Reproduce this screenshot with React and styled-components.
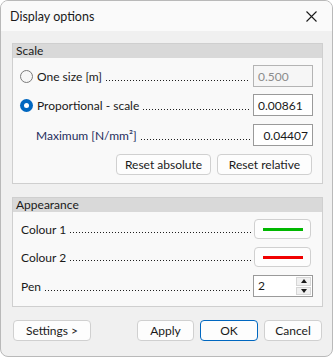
import React from "react";
import styled, { createGlobalStyle } from "styled-components";

const Global = createGlobalStyle`
  html, body { margin: 0; padding: 0; background: #ffffff; }
  body { font-family: Lato, "Noto Sans", sans-serif; font-size: 12px; color: #1a1a1a; }
  * { box-sizing: border-box; }
`;

const Window = styled.div`
  width: 333px;
  height: 357px;
  border: 1px solid #b9b9b9;
  border-radius: 8px;
  background: #f0f0f0;
  overflow: hidden;
  display: flex;
  flex-direction: column;
`;

const TitleBar = styled.div`
  height: 30px;
  background: #fafafa;
  display: flex;
  align-items: center;
  justify-content: space-between;
  padding: 0 9px 0 9px;
  font-size: 12.5px;
  color: #1a1a1a;
`;

const CloseBtn = styled.div`
  width: 20px;
  height: 20px;
  display: flex;
  align-items: center;
  justify-content: center;
  margin-right: 2px;
`;

const Body = styled.div`
  flex: 1;
  padding: 12px 9px 0 11px;
  display: flex;
  flex-direction: column;
`;

const Group = styled.div`
  border: 1px solid #cfcfcf;
  background: #f9f9f9;
  display: flex;
  flex-direction: column;
  margin-bottom: ${(p) => p.$mb || 0}px;
`;

const GroupHeader = styled.div`
  height: 14px;
  line-height: 14px;
  background: #d9d9d9;
  padding-left: 3px;
  font-size: 12px;
  color: #1a1a1a;
`;

const GroupContent = styled.div`
  display: flex;
  flex-direction: column;
  padding: ${(p) => p.$pad};
  gap: ${(p) => p.$gap}px;
`;

const Row = styled.div`
  display: flex;
  align-items: center;
  height: ${(p) => p.$h || 22}px;
  padding-left: ${(p) => p.$indent || 0}px;
  padding-right: ${(p) => p.$right || 9}px;
`;

const Radio = styled.span`
  width: 13px;
  height: 13px;
  border-radius: 50%;
  flex: none;
  margin-right: 4px;
  border: ${(p) => (p.$on ? "none" : "1px solid #7b7b7b")};
  background: ${(p) => (p.$on ? "#0067c0" : "#f6f6f6")};
  display: flex;
  align-items: center;
  justify-content: center;
  &::after {
    content: "";
    display: ${(p) => (p.$on ? "block" : "none")};
    width: 5px;
    height: 5px;
    border-radius: 50%;
    background: #ffffff;
  }
`;

const Label = styled.span`
  flex: none;
  white-space: nowrap;
  color: ${(p) => p.$color || "#1a1a1a"};
`;

const Leader = styled.span`
  flex: 1;
  align-self: stretch;
  margin: 0 3px 0 4px;
  background-image: linear-gradient(to right, #1e1e1e 1px, transparent 1px);
  background-size: 3px 1px;
  background-repeat: repeat-x;
  background-position: left bottom 6px;
`;

const Field = styled.div`
  width: 60px;
  height: 22px;
  flex: none;
  border: 1px solid ${(p) => (p.$disabled ? "#b4b4b4" : "#9a9a9a")};
  background: ${(p) => (p.$disabled ? "#f6f6f6" : "#ffffff")};
  color: ${(p) => (p.$disabled ? "#8c8c8c" : "#1a1a1a")};
  display: flex;
  align-items: center;
  justify-content: ${(p) => (p.$right ? "flex-end" : "flex-start")};
  padding: 0 4px 0 4px;
  font-size: 12px;
`;

const Button = styled.div`
  height: ${(p) => p.$h || 21}px;
  width: ${(p) => p.$w}px;
  flex: none;
  border: 1px solid ${(p) => (p.$primary ? "#0067c0" : "#d0d0d0")};
  border-radius: 4px;
  background: #fdfdfd;
  display: flex;
  align-items: center;
  justify-content: center;
  font-size: 12px;
  color: #1a1a1a;
`;

const ButtonRow = styled.div`
  display: flex;
  justify-content: flex-end;
  gap: 6px;
  padding-right: 10px;
`;

const ColourButton = styled.div`
  width: 57px;
  height: 20px;
  flex: none;
  margin-right: 2px;
  border: 1px solid #d0d0d0;
  border-radius: 4px;
  background: #fdfdfd;
  display: flex;
  align-items: center;
  justify-content: center;
  &::after {
    content: "";
    width: 40px;
    height: 3px;
    background: ${(p) => p.$colour};
  }
`;

const Spin = styled.div`
  width: 60px;
  height: 22px;
  flex: none;
  border: 1px solid #9a9a9a;
  background: #ffffff;
  display: flex;
  align-items: stretch;
  padding: 1px 1px 1px 4px;
`;

const SpinValue = styled.span`
  flex: 1;
  display: flex;
  align-items: center;
  padding-bottom: 2px;
`;

const SpinArrows = styled.div`
  width: 15px;
  display: flex;
  flex-direction: column;
  gap: 1px;
`;

const SpinArrow = styled.div`
  flex: 1;
  background: #f0f0f0;
  border: 1px solid #d6d6d6;
  display: flex;
  align-items: center;
  justify-content: center;
  &::after {
    content: "";
    width: 0;
    height: 0;
    border-left: 3px solid transparent;
    border-right: 3px solid transparent;
    ${(p) => (p.$up ? "border-bottom: 4px solid #1a1a1a;" : "border-top: 4px solid #1a1a1a;")}
  }
`;

const Footer = styled.div`
  display: flex;
  align-items: center;
  justify-content: space-between;
  padding: 0 1px 0 1px;
`;

export default function App() {
  return (
    <>
      <Global />
      <Window>
        <TitleBar>
          <span>Display options</span>
          <CloseBtn>
            <svg width="11" height="11" viewBox="0 0 11 11">
              <path d="M0.5 0.5 L10.5 10.5 M10.5 0.5 L0.5 10.5" stroke="#1a1a1a" strokeWidth="1.1" fill="none" />
            </svg>
          </CloseBtn>
        </TitleBar>
        <Body>
          <Group $mb={13}>
            <GroupHeader>Scale</GroupHeader>
            <GroupContent $pad="7px 0 8px 7px" $gap={7}>
              <Row>
                <Radio />
                <Label>One size [m]</Label>
                <Leader />
                <Field $disabled>0.500</Field>
              </Row>
              <Row>
                <Radio $on />
                <Label>Proportional - scale</Label>
                <Leader />
                <Field>0.00861</Field>
              </Row>
              <Row $indent={16} style={{ marginTop: 1 }}>
                <Label $color="#1f2d5c">Maximum [N/mm²]</Label>
                <Leader />
                <Field $right>0.04407</Field>
              </Row>
              <ButtonRow style={{ marginTop: 1 }}>
                <Button $w={95}>Reset absolute</Button>
                <Button $w={95}>Reset relative</Button>
              </ButtonRow>
            </GroupContent>
          </Group>
          <Group $mb={13}>
            <GroupHeader>Appearance</GroupHeader>
            <GroupContent $pad="7px 0 9px 8px" $gap={8}>
              <Row $h={20}>
                <Label>Colour 1</Label>
                <Leader />
                <ColourButton $colour="#00b700" />
              </Row>
              <Row $h={20}>
                <Label>Colour 2</Label>
                <Leader />
                <ColourButton $colour="#f00000" />
              </Row>
              <Row>
                <Label>Pen</Label>
                <Leader />
                <Spin>
                  <SpinValue>2</SpinValue>
                  <SpinArrows>
                    <SpinArrow $up />
                    <SpinArrow />
                  </SpinArrows>
                </Spin>
              </Row>
            </GroupContent>
          </Group>
          <Footer>
            <Button $w={78} $h={21}>Settings &gt;</Button>
            <ButtonRow style={{ paddingRight: 0 }}>
              <Button $w={57}>Apply</Button>
              <Button $w={58} $primary>OK</Button>
              <Button $w={58}>Cancel</Button>
            </ButtonRow>
          </Footer>
        </Body>
      </Window>
    </>
  );
}
